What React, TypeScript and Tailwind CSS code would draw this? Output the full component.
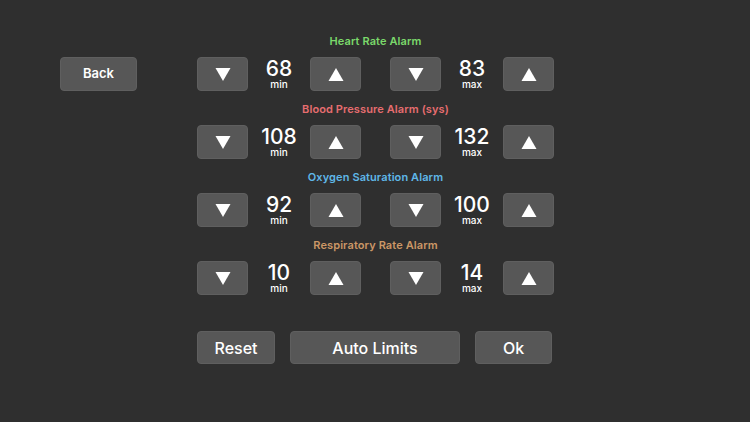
import React, { useState } from 'react';

const font = { fontFamily: 'Inter, "Noto Sans", sans-serif' };

interface Alarm {
  title: string;
  color: string;
  min: number;
  max: number;
}

const Triangle: React.FC<{ up?: boolean }> = ({ up }) => (
  <svg width="16" height="15" viewBox="0 0 16 15">
    {up ? <polygon points="8,1 15.5,14 0.5,14" fill="#fff" /> : <polygon points="0.5,1 15.5,1 8,14" fill="#fff" />}
  </svg>
);

const StepButton: React.FC<{ up?: boolean; onClick: () => void }> = ({ up, onClick }) => (
  <button
    onClick={onClick}
    className="w-[51px] h-[34px] rounded-[4px] bg-[#575757] border border-[#5f5f5f] flex items-center justify-center"
  >
    <Triangle up={up} />
  </button>
);

const Value: React.FC<{ value: number; label: string }> = ({ value, label }) => (
  <div className="w-[62px] h-[34px] flex flex-col items-center justify-center text-white">
    <span className="text-[21px] leading-[21px] font-medium">{value}</span>
    <span className="text-[10px] leading-[11px] font-medium">{label}</span>
  </div>
);

const App: React.FC = () => {
  const [alarms, setAlarms] = useState<Alarm[]>([
    { title: 'Heart Rate Alarm', color: 'text-[#7bd96b]', min: 68, max: 83 },
    { title: 'Blood Pressure Alarm (sys)', color: 'text-[#e66d6f]', min: 108, max: 132 },
    { title: 'Oxygen Saturation Alarm', color: 'text-[#5fb7e8]', min: 92, max: 100 },
    { title: 'Respiratory Rate Alarm', color: 'text-[#cc9766]', min: 10, max: 14 },
  ]);

  const change = (i: number, key: 'min' | 'max', delta: number) => {
    setAlarms((prev) => prev.map((a, idx) => (idx === i ? { ...a, [key]: a[key] + delta } : a)));
  };

  return (
    <div className="w-[750px] h-[422px] bg-[#2f2f2f] flex pl-[60px] pt-[34px]" style={font}>
      <div className="w-[77px] pt-[23px]">
        <button className="w-[77px] h-[34px] rounded-[4px] bg-[#575757] border border-[#5f5f5f] text-white text-[13px] font-semibold">
          Back
        </button>
      </div>

      <div className="ml-[60px] w-[357px] flex flex-col">
        {alarms.map((a, i) => (
          <div key={a.title} className="flex flex-col mb-[11px]">
            <div className={`h-[14px] leading-[14px] mb-[9px] text-center text-[11px] font-semibold tracking-[0.1px] ${a.color}`}>
              {a.title}
            </div>
            <div className="flex items-center">
              <StepButton onClick={() => change(i, 'min', -1)} />
              <Value value={a.min} label="min" />
              <StepButton up onClick={() => change(i, 'min', 1)} />
              <div className="w-[29px]" />
              <StepButton onClick={() => change(i, 'max', -1)} />
              <Value value={a.max} label="max" />
              <StepButton up onClick={() => change(i, 'max', 1)} />
            </div>
          </div>
        ))}

        <div className="flex mt-[25px] gap-[15px]">
          <button className="w-[78px] h-[33px] rounded-[4px] bg-[#575757] border border-[#5f5f5f] text-white text-[16px] font-medium">
            Reset
          </button>
          <button className="w-[170px] h-[33px] rounded-[4px] bg-[#575757] border border-[#5f5f5f] text-white text-[16px] font-medium">
            Auto Limits
          </button>
          <button className="w-[77px] h-[33px] rounded-[4px] bg-[#575757] border border-[#5f5f5f] text-white text-[16px] font-medium">
            Ok
          </button>
        </div>
      </div>
    </div>
  );
};

export default App;
